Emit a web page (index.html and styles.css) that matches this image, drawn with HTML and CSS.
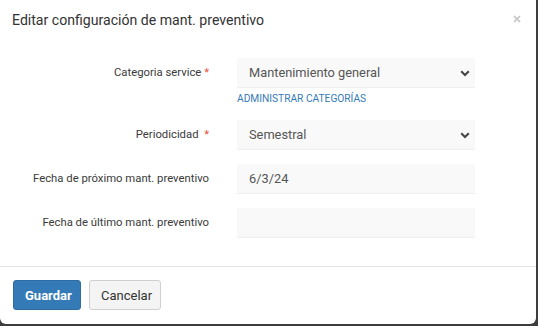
FILE: index.html
```html
<!DOCTYPE html>
<html lang="es">
<head>
	<meta charset="UTF-8">
	<title>Editar configuración de mant. preventivo</title>
	<link rel="stylesheet" href="styles.css">
</head>
<body>
	<div class="modal">
		<div class="modal-header">
			<h4 class="modal-title">Editar configuración de mant. preventivo</h4>
			<span class="close">
				<svg width="8" height="8" viewBox="0 0 8 8"><path d="M1 1L7 7M7 1L1 7" stroke="#c4c4c4" stroke-width="1.7"/></svg>
			</span>
		</div>
		<div class="modal-body">
			<div class="form-row">
				<label>Categoria service <span class="req">*</span></label>
				<div class="field">
					<div class="select">
						<span>Mantenimiento general</span>
						<svg class="chevron" width="10" height="7" viewBox="0 0 10 7"><path d="M1.2 1.2L5 5L8.8 1.2" fill="none" stroke="#444" stroke-width="2"/></svg>
					</div>
					<a class="link" href="#">ADMINISTRAR CATEGORÍAS</a>
				</div>
			</div>
			<div class="form-row">
				<label>Periodicidad&nbsp; <span class="req">*</span></label>
				<div class="field">
					<div class="select">
						<span>Semestral</span>
						<svg class="chevron" width="10" height="7" viewBox="0 0 10 7"><path d="M1.2 1.2L5 5L8.8 1.2" fill="none" stroke="#444" stroke-width="2"/></svg>
					</div>
				</div>
			</div>
			<div class="form-row">
				<label>Fecha de próximo mant. preventivo</label>
				<div class="field">
					<div class="input">6/3/24</div>
				</div>
			</div>
			<div class="form-row">
				<label>Fecha de último mant. preventivo</label>
				<div class="field">
					<div class="input"></div>
				</div>
			</div>
		</div>
		<div class="modal-footer">
			<button class="btn btn-primary">Guardar</button>
			<button class="btn btn-default">Cancelar</button>
		</div>
	</div>
</body>
</html>
```

FILE: styles.css
```css
*{
	padding: 0;
	margin: 0;
	box-sizing: border-box;
}
body{
	background-color: #3d3d3d;
	font-family: Roboto, "Liberation Sans", sans-serif;
	color: #333;
	width: 538px;
	height: 326px;
	overflow: hidden;
}
.modal{
	width: 536px;
	height: 324px;
	background-color: #fff;
	border-radius: 0 0 6px 6px;
	display: flex;
	flex-direction: column;
}
.modal-header{
	display: flex;
	justify-content: space-between;
	align-items: center;
	padding: 10px 12px 0 12px;
	height: 30px;
}
.modal-title{
	font-size: 14.1px;
	font-weight: 400;
	line-height: 20px;
	color: #333;
}
.close{
	display: flex;
	margin-right: 3px;
	margin-top: -2px;
}
.modal-body{
	padding-top: 28px;
	height: 237px;
	border-bottom: 1px solid #e5e5e5;
}
.form-row{
	display: grid;
	grid-template-columns: 209px 238px;
	column-gap: 28px;
	margin-bottom: 14px;
}
.form-row label{
	font-size: 11.3px;
	text-align: right;
	line-height: 30px;
	color: #3a3a3a;
}
.req{
	color: #e74c3c;
}
.select,
.input{
	height: 30px;
	background-color: #f9f9f9;
	border-bottom: 1px solid #efefef;
	font-size: 12.8px;
	line-height: 29px;
	color: #555;
	padding-left: 12px;
	position: relative;
}
.chevron{
	position: absolute;
	right: 5px;
	top: 12px;
}
.link{
	display: block;
	font-size: 10.2px;
	color: #357ab8;
	text-decoration: none;
	line-height: 12px;
	margin-top: 5px;
	margin-bottom: 1px;
}
.modal-footer{
	display: flex;
	gap: 8px;
	padding: 13px 13px;
}
.btn{
	height: 30px;
	border-radius: 3px;
	font-family: Roboto, "Liberation Sans", sans-serif;
	font-size: 13px;
	padding: 0 11px;
	cursor: pointer;
}
.btn-primary{
	background-color: #337ab7;
	border: 1px solid #2e6da4;
	color: #fff;
	font-weight: 700;
	width: 68px;
}
.btn-default{
	background-color: #f4f4f4;
	border: 1px solid #cfcfcf;
	color: #333;
	width: 72px;
}
```
